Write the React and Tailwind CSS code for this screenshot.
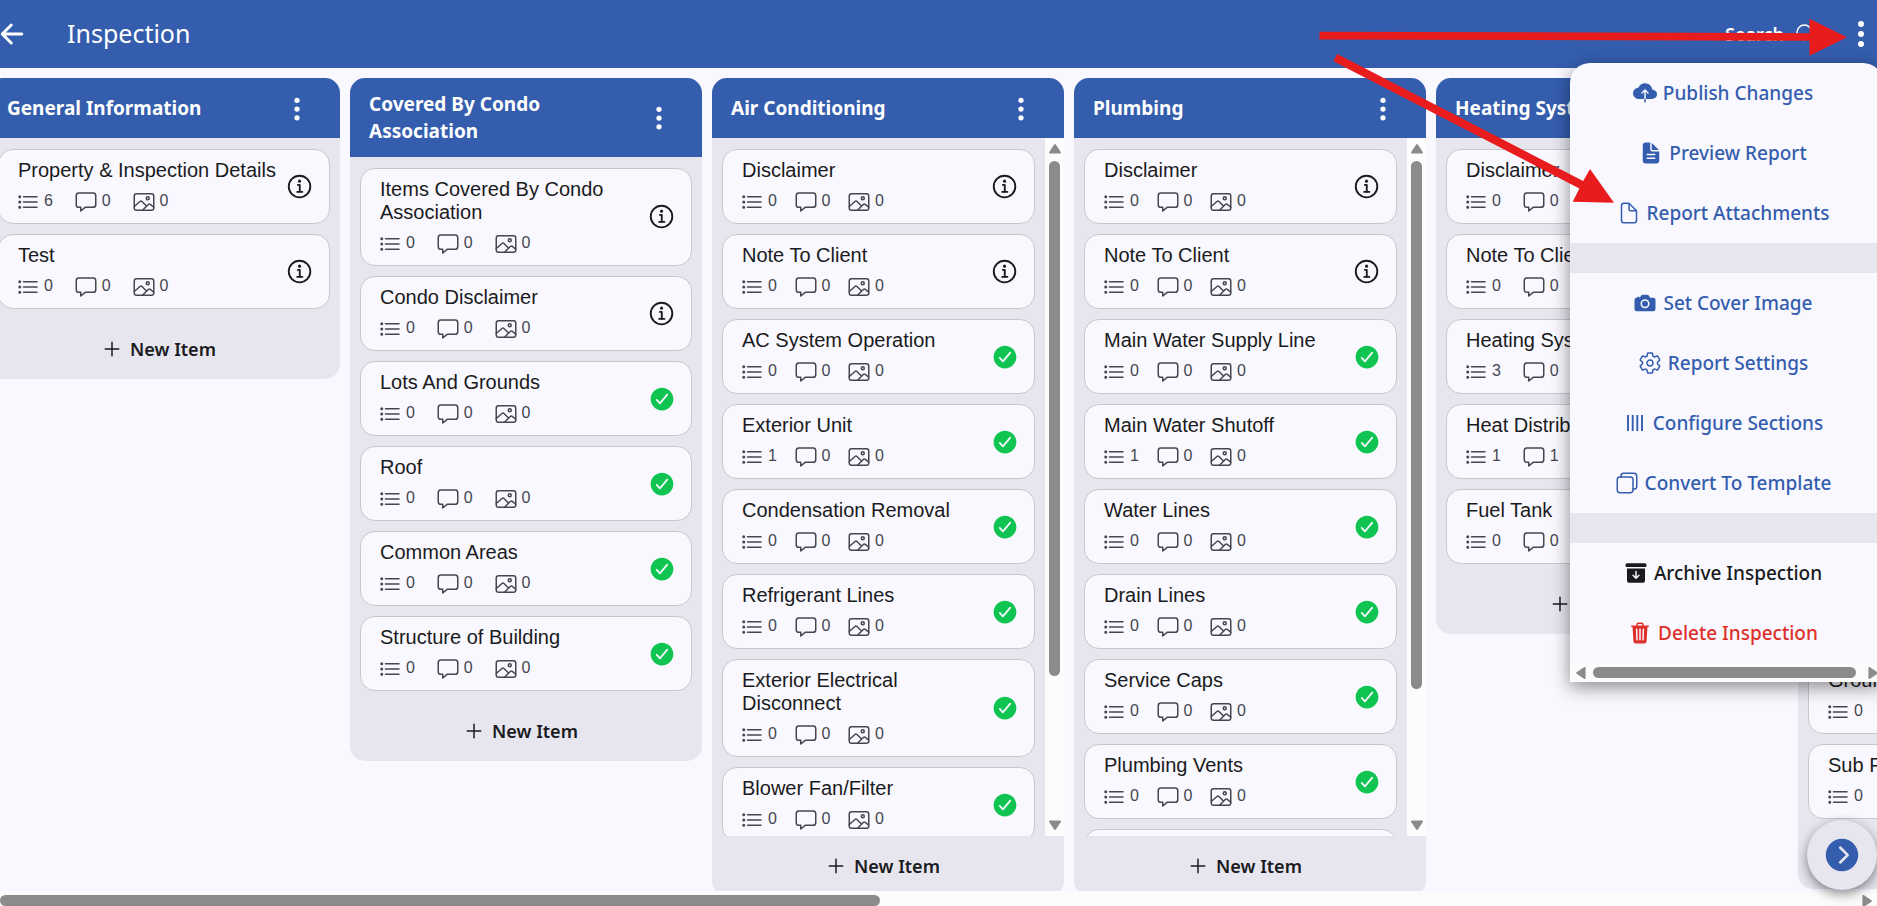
import React from 'react'
import {
  IoAdd,
  IoArchive,
  IoArrowBack,
  IoCamera,
  IoChatboxOutline,
  IoCheckmarkCircle,
  IoChevronForwardCircle,
  IoCloudUpload,
  IoCopyOutline,
  IoDocumentOutline,
  IoDocumentText,
  IoEllipsisVertical,
  IoImageOutline,
  IoInformationCircleOutline,
  IoListOutline,
  IoSearchOutline,
  IoSettingsOutline,
  IoTrash,
} from 'react-icons/io5'

const info = (title, list = 0, comments = 0) => ({ title, list, comments, info: true })
const done = (title, list = 0, comments = 0) => ({ title, list, comments, info: false })

const columns = [
  {
    title: 'General Information',
    items: [info('Property & Inspection Details', 6), info('Test')],
  },
  {
    title: 'Covered By Condo Association',
    items: [
      info('Items Covered By Condo Association'),
      info('Condo Disclaimer'),
      done('Lots And Grounds'),
      done('Roof'),
      done('Common Areas'),
      done('Structure of Building'),
    ],
  },
  {
    title: 'Air Conditioning',
    thumb: 79,
    items: [
      info('Disclaimer'),
      info('Note To Client'),
      done('AC System Operation'),
      done('Exterior Unit', 1),
      done('Condensation Removal'),
      done('Refrigerant Lines'),
      done('Exterior Electrical Disconnect'),
      done('Blower Fan/Filter'),
    ],
  },
  {
    title: 'Plumbing',
    thumb: 81,
    items: [
      info('Disclaimer'),
      info('Note To Client'),
      done('Main Water Supply Line'),
      done('Main Water Shutoff', 1),
      done('Water Lines'),
      done('Drain Lines'),
      done('Service Caps'),
      done('Plumbing Vents'),
      done('Water Heater'),
    ],
  },
  {
    title: 'Heating System',
    items: [
      info('Disclaimer'),
      info('Note To Client'),
      done('Heating System Operation', 3),
      done('Heat Distribution', 1, 1),
      done('Fuel Tank'),
    ],
  },
  {
    title: 'Electrical',
    items: [
      info('Disclaimer'),
      info('Note To Client'),
      done('Service Entrance'),
      done('Main Panel'),
      done('Branch Wiring'),
      done('Outlets'),
      done('Grounding'),
      done('Sub Panel'),
    ],
  },
]

function SectionsIcon({ className }) {
  return (
    <svg className={className} viewBox="0 0 24 24" stroke="currentColor" strokeWidth="1.9" aria-hidden="true">
      <path d="M5 4v16M9.7 4v16M14.3 4v16M19 4v16" />
    </svg>
  )
}

const menuGroups = [
  [
    { label: 'Publish Changes', Icon: IoCloudUpload },
    { label: 'Preview Report', Icon: IoDocumentText },
    { label: 'Report Attachments', Icon: IoDocumentOutline },
  ],
  [
    { label: 'Set Cover Image', Icon: IoCamera },
    { label: 'Report Settings', Icon: IoSettingsOutline },
    { label: 'Configure Sections', Icon: SectionsIcon },
    { label: 'Convert To Template', Icon: IoCopyOutline, iconClass: '-scale-x-100' },
  ],
  [
    { label: 'Archive Inspection', Icon: IoArchive, color: 'text-[#1a1b20]' },
    { label: 'Delete Inspection', Icon: IoTrash, color: 'text-[#dd3029]' },
  ],
]

function Stat({ Icon, value }) {
  return (
    <span className="flex items-start gap-1">
      <Icon className="size-6 shrink-0" />
      <span className="leading-[22px]">{value}</span>
    </span>
  )
}

function Card({ item }) {
  return (
    <li className="flex shrink-0 items-center gap-[7px] rounded-[15px] border border-[#c8c7c9] bg-[#f9f8ff] py-[9px] pr-3.5 pl-[19px]">
      <div className="min-w-0 flex-1">
        <h3 className="text-[20px] leading-[23px] text-[#1a1b20]">{item.title}</h3>
        <div className="mt-2 -ml-0.5 grid h-6 w-2/3 grid-cols-3 text-base text-[#45464f]">
          <Stat Icon={IoListOutline} value={item.list} />
          <Stat Icon={IoChatboxOutline} value={item.comments} />
          <Stat Icon={IoImageOutline} value={0} />
        </div>
      </div>
      <span className="flex w-[30px] shrink-0 justify-center">
        {item.info ? (
          <IoInformationCircleOutline className="size-[30px] text-[#1a1b20]" />
        ) : (
          <IoCheckmarkCircle className="size-7 text-[#10c452]" />
        )}
      </span>
    </li>
  )
}

function VerticalScrollbar({ thumb }) {
  return (
    <div className="flex w-[19px] shrink-0 flex-col items-center bg-[#fcfcfc] py-1.5 text-[#8b8b8b]">
      <svg className="h-2.5 w-3" viewBox="0 0 12 10" fill="currentColor">
        <path d="M5.2.6a1 1 0 0 1 1.6 0l5 7.4a1 1 0 0 1-.8 1.6H1a1 1 0 0 1-.8-1.6z" />
      </svg>
      <div className="my-[7px] w-[11px] flex-1">
        <div className="w-full rounded-full bg-[#8b8b8b]" style={{ height: `${thumb}%` }} />
      </div>
      <svg className="h-2.5 w-3 rotate-180" viewBox="0 0 12 10" fill="currentColor">
        <path d="M5.2.6a1 1 0 0 1 1.6 0l5 7.4a1 1 0 0 1-.8 1.6H1a1 1 0 0 1-.8-1.6z" />
      </svg>
    </div>
  )
}

function Column({ column }) {
  return (
    <section className="flex max-h-full w-[352px] shrink-0 flex-col overflow-hidden rounded-[15px] bg-[#e7e5ee]">
      <header className="flex min-h-[60px] shrink-0 items-center justify-between bg-[#345dae] pt-[13px] pr-[29px] pb-3 pl-[19px] text-white">
        <h2 className="w-[220px] font-['Noto_Sans',sans-serif] text-[19px] leading-[27px] font-bold">
          {column.title}
        </h2>
        <button type="button" aria-label={`${column.title} options`}>
          <IoEllipsisVertical className="size-7" />
        </button>
      </header>
      <div className="flex min-h-0 flex-1">
        <ul className="flex min-w-0 flex-1 flex-col gap-2.5 overflow-hidden px-2.5 pt-[11px] pb-2.5">
          {column.items.map((item) => (
            <Card key={item.title} item={item} />
          ))}
        </ul>
        {column.thumb && <VerticalScrollbar thumb={column.thumb} />}
      </div>
      <button
        type="button"
        className="flex h-[60px] shrink-0 items-center justify-center gap-1.5 pr-3 font-['Noto_Sans',sans-serif] text-[18px] font-semibold text-[#1a1b20]"
      >
        <IoAdd className="size-6" />
        New Item
      </button>
    </section>
  )
}

function Menu() {
  return (
    <div
      role="menu"
      className="absolute top-[63px] -right-1.5 w-[313px] rounded-t-[20px] bg-[#f9f8ff] font-['Noto_Sans',sans-serif] text-[19px] font-medium shadow-[0_5px_18px_rgba(0,0,0,0.45)]"
    >
      {menuGroups.map((group, index) => (
        <div key={group[0].label} className={index ? 'border-t-[30px] border-[#e7e5ee]' : ''}>
          {group.map(({ label, Icon, iconClass, color }) => (
            <button
              key={label}
              type="button"
              role="menuitem"
              className={`flex h-[60px] w-full items-center justify-center gap-1.5 pr-[7px] ${color ?? 'text-[#345dae]'}`}
            >
              <Icon className={`size-6 ${iconClass ?? ''}`} />
              {label}
            </button>
          ))}
        </div>
      ))}
      <div className="flex h-[19px] items-center bg-[#fcfcfc] pr-[5px] pl-1.5 text-[#8b8b8b]">
        <svg className="h-3 w-2.5" viewBox="0 0 10 12" fill="currentColor">
          <path d="M.6 5.2a1 1 0 0 0 0 1.6l7.4 5a1 1 0 0 0 1.6-.8V1A1 1 0 0 0 8 .2z" />
        </svg>
        <div className="mr-3 ml-[7px] h-[11px] flex-1 rounded-full bg-[#8b8b8b]" />
        <svg className="h-3 w-2.5 rotate-180" viewBox="0 0 10 12" fill="currentColor">
          <path d="M.6 5.2a1 1 0 0 0 0 1.6l7.4 5a1 1 0 0 0 1.6-.8V1A1 1 0 0 0 8 .2z" />
        </svg>
      </div>
    </div>
  )
}

function Arrows() {
  return (
    <svg
      className="pointer-events-none absolute top-0 right-0 h-[220px] w-[577px]"
      viewBox="1300 0 577 220"
      fill="#e81c1c"
    >
      <path d="M1319.5 31.7 1809.5 33.2V18.7L1847 37.2 1809.5 55.8V40.8L1319.5 39.4z" />
      <path d="M1337.2 54 1583.2 181 1590 169 1614 202.8 1572.7 201.8 1579.4 188.4 1333.4 61.2z" />
    </svg>
  )
}

export default function App() {
  return (
    <div className="relative flex h-screen flex-col overflow-hidden bg-[#f9f8ff] font-['Liberation_Sans',Arial,sans-serif]">
      <header className="flex h-[68px] shrink-0 items-center bg-[#345dae] font-['Noto_Sans',sans-serif] text-white">
        <button type="button" aria-label="Back" className="-ml-1">
          <IoArrowBack className="size-8" />
        </button>
        <h1 className="ml-[39px] flex-1 text-[25px]">Inspection</h1>
        <button type="button" className="mr-[27px] flex items-center gap-2.5 text-[18px] font-semibold">
          Search
          <IoSearchOutline className="size-6" />
        </button>
        <button type="button" aria-label="More options">
          <IoEllipsisVertical className="size-8" />
        </button>
      </header>

      <main className="min-h-0 flex-1 overflow-hidden">
        <div className="-ml-3 flex h-[calc(100%+5px)] items-start gap-[10px] pt-2.5">
          {columns.map((column) => (
            <Column key={column.title} column={column} />
          ))}
        </div>
      </main>

      <div className="relative flex h-[15px] shrink-0 justify-between bg-[#fcfcfc] pt-1 pr-[5px] text-[#8b8b8b]">
        <div className="h-[11px] w-[47%] rounded-full bg-[#8b8b8b]" />
        <svg className="h-3 w-2.5 rotate-180" viewBox="0 0 10 12" fill="currentColor">
          <path d="M.6 5.2a1 1 0 0 0 0 1.6l7.4 5a1 1 0 0 0 1.6-.8V1A1 1 0 0 0 8 .2z" />
        </svg>
      </div>

      <button
        type="button"
        aria-label="Next"
        className="absolute right-0 bottom-4 flex size-[70px] items-center justify-center rounded-full bg-[#e7e5ee] text-[#345dae] shadow-[0_4px_12px_rgba(0,0,0,0.45)]"
      >
        <IoChevronForwardCircle className="size-10" />
      </button>

      <Menu />
      <Arrows />
    </div>
  )
}
